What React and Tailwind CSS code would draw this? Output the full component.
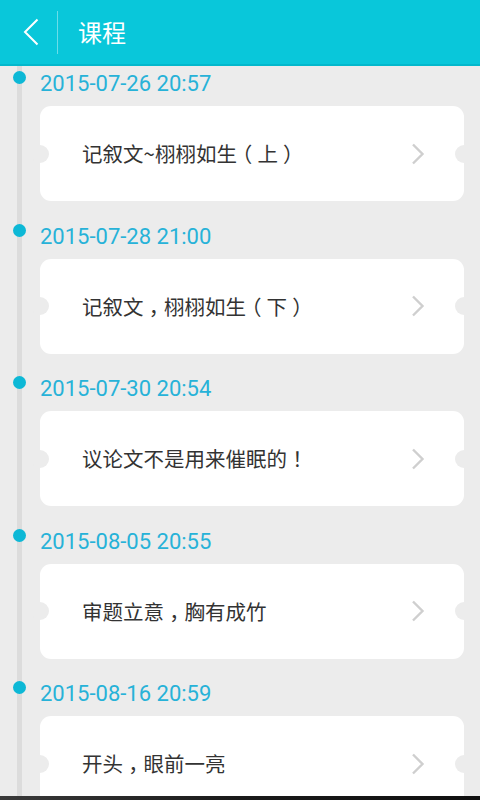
import React from "react";

const items = [
  { date: "2015-07-26 20:57", title: "记叙文~栩栩如生（上）" },
  { date: "2015-07-28 21:00", title: "记叙文，栩栩如生（下）" },
  { date: "2015-07-30 20:54", title: "议论文不是用来催眠的！" },
  { date: "2015-08-05 20:55", title: "审题立意，胸有成竹" },
  { date: "2015-08-16 20:59", title: "开头，眼前一亮" },
];

const PUNCT = "，（）！";

function Title({ text }) {
  return (
    <>
      {Array.from(text).map((ch, i) =>
        PUNCT.includes(ch) ? (
          <span
            key={i}
            className="inline-block w-[1em] text-center"
            style={{ fontFeatureSettings: '"halt"' }}
          >
            {ch}
          </span>
        ) : (
          <React.Fragment key={i}>{ch}</React.Fragment>
        )
      )}
    </>
  );
}

function Card({ title }) {
  return (
    <div className="relative ml-[40px] mr-[16px] h-[95px] rounded-[11px] bg-white flex items-center">
      <div className="absolute left-[-9px] top-1/2 -translate-y-1/2 w-[18px] h-[18px] rounded-full bg-[#ececec]" />
      <div className="absolute right-[-9px] top-1/2 -translate-y-1/2 w-[18px] h-[18px] rounded-full bg-[#ececec]" />
      <span
        className="pl-[42px] flex-1 text-[20.5px] text-[#333333] leading-none"
        style={{ fontFamily: "'Noto Sans CJK SC', sans-serif" }}
      >
        <Title text={title} />
      </span>
      <svg width="14" height="22" viewBox="0 0 14 22" className="mr-[39px]">
        <path d="M2 1.5 L11.5 11 L2 20.5" fill="none" stroke="#cfcfcf" strokeWidth="2.4" />
      </svg>
    </div>
  );
}

export default function App() {
  return (
    <div className="w-[480px] h-[800px] flex flex-col overflow-hidden bg-[#ececec]">
      <header className="h-[66px] shrink-0 bg-[#09c7da] border-b-2 border-[#03b8cc] flex items-center">
        <div className="w-[57px] flex justify-center">
          <svg width="18" height="28" viewBox="0 0 18 28" className="ml-[4px]">
            <path d="M15.5 1.5 L3 14 L15.5 26.5" fill="none" stroke="#ffffff" strokeWidth="2" />
          </svg>
        </div>
        <div className="w-px h-[43px] bg-white/40" />
        <div
          className="ml-[20px] text-[24px] text-white leading-none"
          style={{ fontFamily: "'Noto Sans CJK SC', sans-serif" }}
        >
          课程
        </div>
      </header>
      <main className="relative flex-1 overflow-hidden">
        <div className="absolute left-[17px] top-0 bottom-0 w-[5px] bg-[#dcdcdc]" />
        <div className="relative flex flex-col gap-[17.5px]">
          {items.map((it) => (
            <div key={it.date} className="flex flex-col">
              <div className="h-[36px] flex items-start">
                <div className="w-[40px] shrink-0">
                  <div className="ml-[13px] mt-[5px] w-[13px] h-[13px] rounded-full bg-[#0db8d6]" />
                </div>
                <span
                  className="text-[22px] leading-[36px] text-[#27b2d8]"
                  style={{ fontFamily: "Roboto, sans-serif" }}
                >
                  {it.date}
                </span>
              </div>
              <div className="mt-[4px]">
                <Card title={it.title} />
              </div>
            </div>
          ))}
        </div>
      </main>
      <div className="h-[4px] shrink-0 bg-gradient-to-r from-[#3a3a3a] via-[#1a1a1a] to-[#101010]" />
    </div>
  );
}
